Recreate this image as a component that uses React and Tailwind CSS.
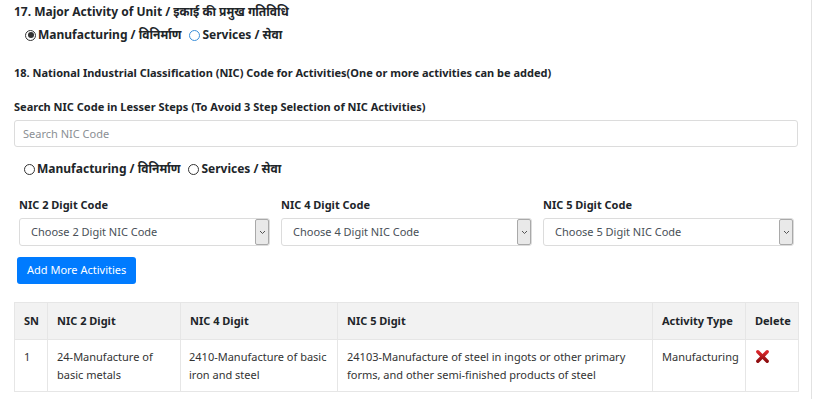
import { useState } from 'react';

// Radio dot drawn by hand so it looks like the old Windows control
function Radio({ checked, tone = 'dark' }) {
  const ring = tone === 'blue' ? 'border-[#3b8fd9]' : 'border-[#333]';
  return (
    <span className={`inline-flex items-center justify-center w-[11px] h-[11px] rounded-full border ${ring} bg-white mr-[2px]`}>
      {checked && <span className="w-[6px] h-[6px] rounded-full bg-[#333]" />}
    </span>
  );
}

function RadioRow({ value, blueSecond }) {
  return (
    <div className="flex items-center text-[12px] font-bold text-[#212529]">
      <label className="flex items-center">
        <Radio checked={value === 'm'} />
        <span>Manufacturing / विनिर्माण</span>
      </label>
      <label className="flex items-center ml-[8px]">
        <Radio checked={value === 's'} tone={blueSecond ? 'blue' : 'dark'} />
        <span>Services / सेवा</span>
      </label>
    </div>
  );
}

function FakeSelect({ label, placeholder }) {
  return (
    <div className="flex flex-col w-[251px]">
      <div className="text-[11px] font-bold text-[#212529] h-[20px] flex items-center">{label}</div>
      <div className="mt-[3px] h-[28px] flex items-stretch border border-[#dcdcdc] rounded-[3px] bg-white">
        <div className="flex-1 flex items-center pl-[11px] text-[11px] text-[#495057]">{placeholder}</div>
        <div className="w-[14px] flex items-center justify-center bg-[#e9e9e9] border border-[#a9a9a9] rounded-[2px]">
          <svg width="7" height="5" viewBox="0 0 7 5">
            <path d="M1 1 L3.5 3.5 L6 1" fill="none" stroke="#555" strokeWidth="1" />
          </svg>
        </div>
      </div>
    </div>
  );
}

function DeleteIcon() {
  return (
    <svg width="15" height="15" viewBox="0 0 16 16">
      <defs>
        <linearGradient id="xg" x1="0" y1="0" x2="0" y2="1">
          <stop offset="0" stopColor="#d9272b" />
          <stop offset="1" stopColor="#8e0d0f" />
        </linearGradient>
      </defs>
      <path d="M3 3 L13 13 M13 3 L3 13" stroke="url(#xg)" strokeWidth="3.6" strokeLinecap="round" />
    </svg>
  );
}

export default function App() {
  const [major] = useState('m');
  const rows = [
    {
      sn: 1,
      nic2: '24-Manufacture of basic metals',
      nic4: '2410-Manufacture of basic iron and steel',
      nic5: '24103-Manufacture of steel in ingots or other primary forms, and other semi-finished products of steel',
      type: 'Manufacturing',
    },
  ];

  return (
    <div
      className="w-[812px] h-[399px] border-r border-[#e2e2e2] bg-white text-[#212529] overflow-hidden"
      style={{ fontFamily: '"Noto Sans", "Noto Sans Devanagari", "Open Sans", sans-serif' }}
    >
      <div className="pl-[14px] pr-[14px] pt-[2px]">
        {/* ── 17. Major activity ─────────────────────────── */}
        <div className="h-[20px] flex items-center text-[12px] font-bold">
          17. Major Activity of Unit / इकाई की प्रमुख गतिविधि
        </div>
        <div className="pl-[11px] h-[26px] flex items-center">
          <RadioRow value={major} blueSecond />
        </div>

        {/* ── 18. NIC ─────────────────────────────────────── */}
        <div className="mt-[15px] h-[20px] flex items-center text-[11px] font-bold">
          18. National Industrial Classification (NIC) Code for Activities(One or more activities can be added)
        </div>
        <div className="mt-[14px] h-[20px] flex items-center text-[11px] font-bold">
          Search NIC Code in Lesser Steps (To Avoid 3 Step Selection of NIC Activities)
        </div>
        <input
          className="block mt-[3px] w-[784px] h-[27px] border border-[#dcdcdc] rounded-[3px] px-[8px] text-[11px] outline-none placeholder:text-[#8a8f94]"
          placeholder="Search NIC Code"
        />
        <div className="pl-[10px] mt-[9px] h-[26px] flex items-center">
          <RadioRow value="" />
        </div>

        {/* ── Three step selects ──────────────────────────── */}
        <div className="mt-[13px] pl-[5px] flex gap-[11px]">
          <FakeSelect label="NIC 2 Digit Code" placeholder="Choose 2 Digit NIC Code" />
          <FakeSelect label="NIC 4 Digit Code" placeholder="Choose 4 Digit NIC Code" />
          <FakeSelect label="NIC 5 Digit Code" placeholder="Choose 5 Digit NIC Code" />
        </div>

        <button className="block mt-[11px] ml-[3px] h-[27px] px-[10px] bg-[#007bff] text-white text-[11px] rounded-[3px]">
          Add More Activities
        </button>

        {/* ── Activities table ────────────────────────────── */}
        <table className="mt-[18px] w-[784px] border-collapse text-[11px] table-fixed">
          <colgroup>
            <col className="w-[33px]" />
            <col className="w-[133px]" />
            <col className="w-[157px]" />
            <col className="w-[315px]" />
            <col className="w-[93px]" />
            <col className="w-[53px]" />
          </colgroup>
          <thead>
            <tr className="bg-[#f2f2f2] h-[37px]">
              {['SN', 'NIC 2 Digit', 'NIC 4 Digit', 'NIC 5 Digit', 'Activity Type', 'Delete'].map((h) => (
                <th key={h} className="border border-[#e6e6e6] text-left font-bold px-[9px] whitespace-nowrap">
                  {h}
                </th>
              ))}
            </tr>
          </thead>
          <tbody>
            {rows.map((r) => (
              <tr key={r.sn} className="h-[52px] align-top text-[#333]">
                <td className="border border-[#e6e6e6] px-[9px] pt-[8px] leading-[18px]">{r.sn}</td>
                <td className="border border-[#e6e6e6] px-[9px] pt-[8px] leading-[18px]">{r.nic2}</td>
                <td className="border border-[#e6e6e6] pl-[8px] pr-[4px] pt-[8px] leading-[18px]">{r.nic4}</td>
                <td className="border border-[#e6e6e6] px-[9px] pt-[8px] leading-[18px]">{r.nic5}</td>
                <td className="border border-[#e6e6e6] px-[9px] pt-[8px] leading-[18px]">{r.type}</td>
                <td className="border border-[#e6e6e6] px-[9px] pt-[9px]">
                  <DeleteIcon />
                </td>
              </tr>
            ))}
          </tbody>
        </table>
      </div>
    </div>
  );
}
